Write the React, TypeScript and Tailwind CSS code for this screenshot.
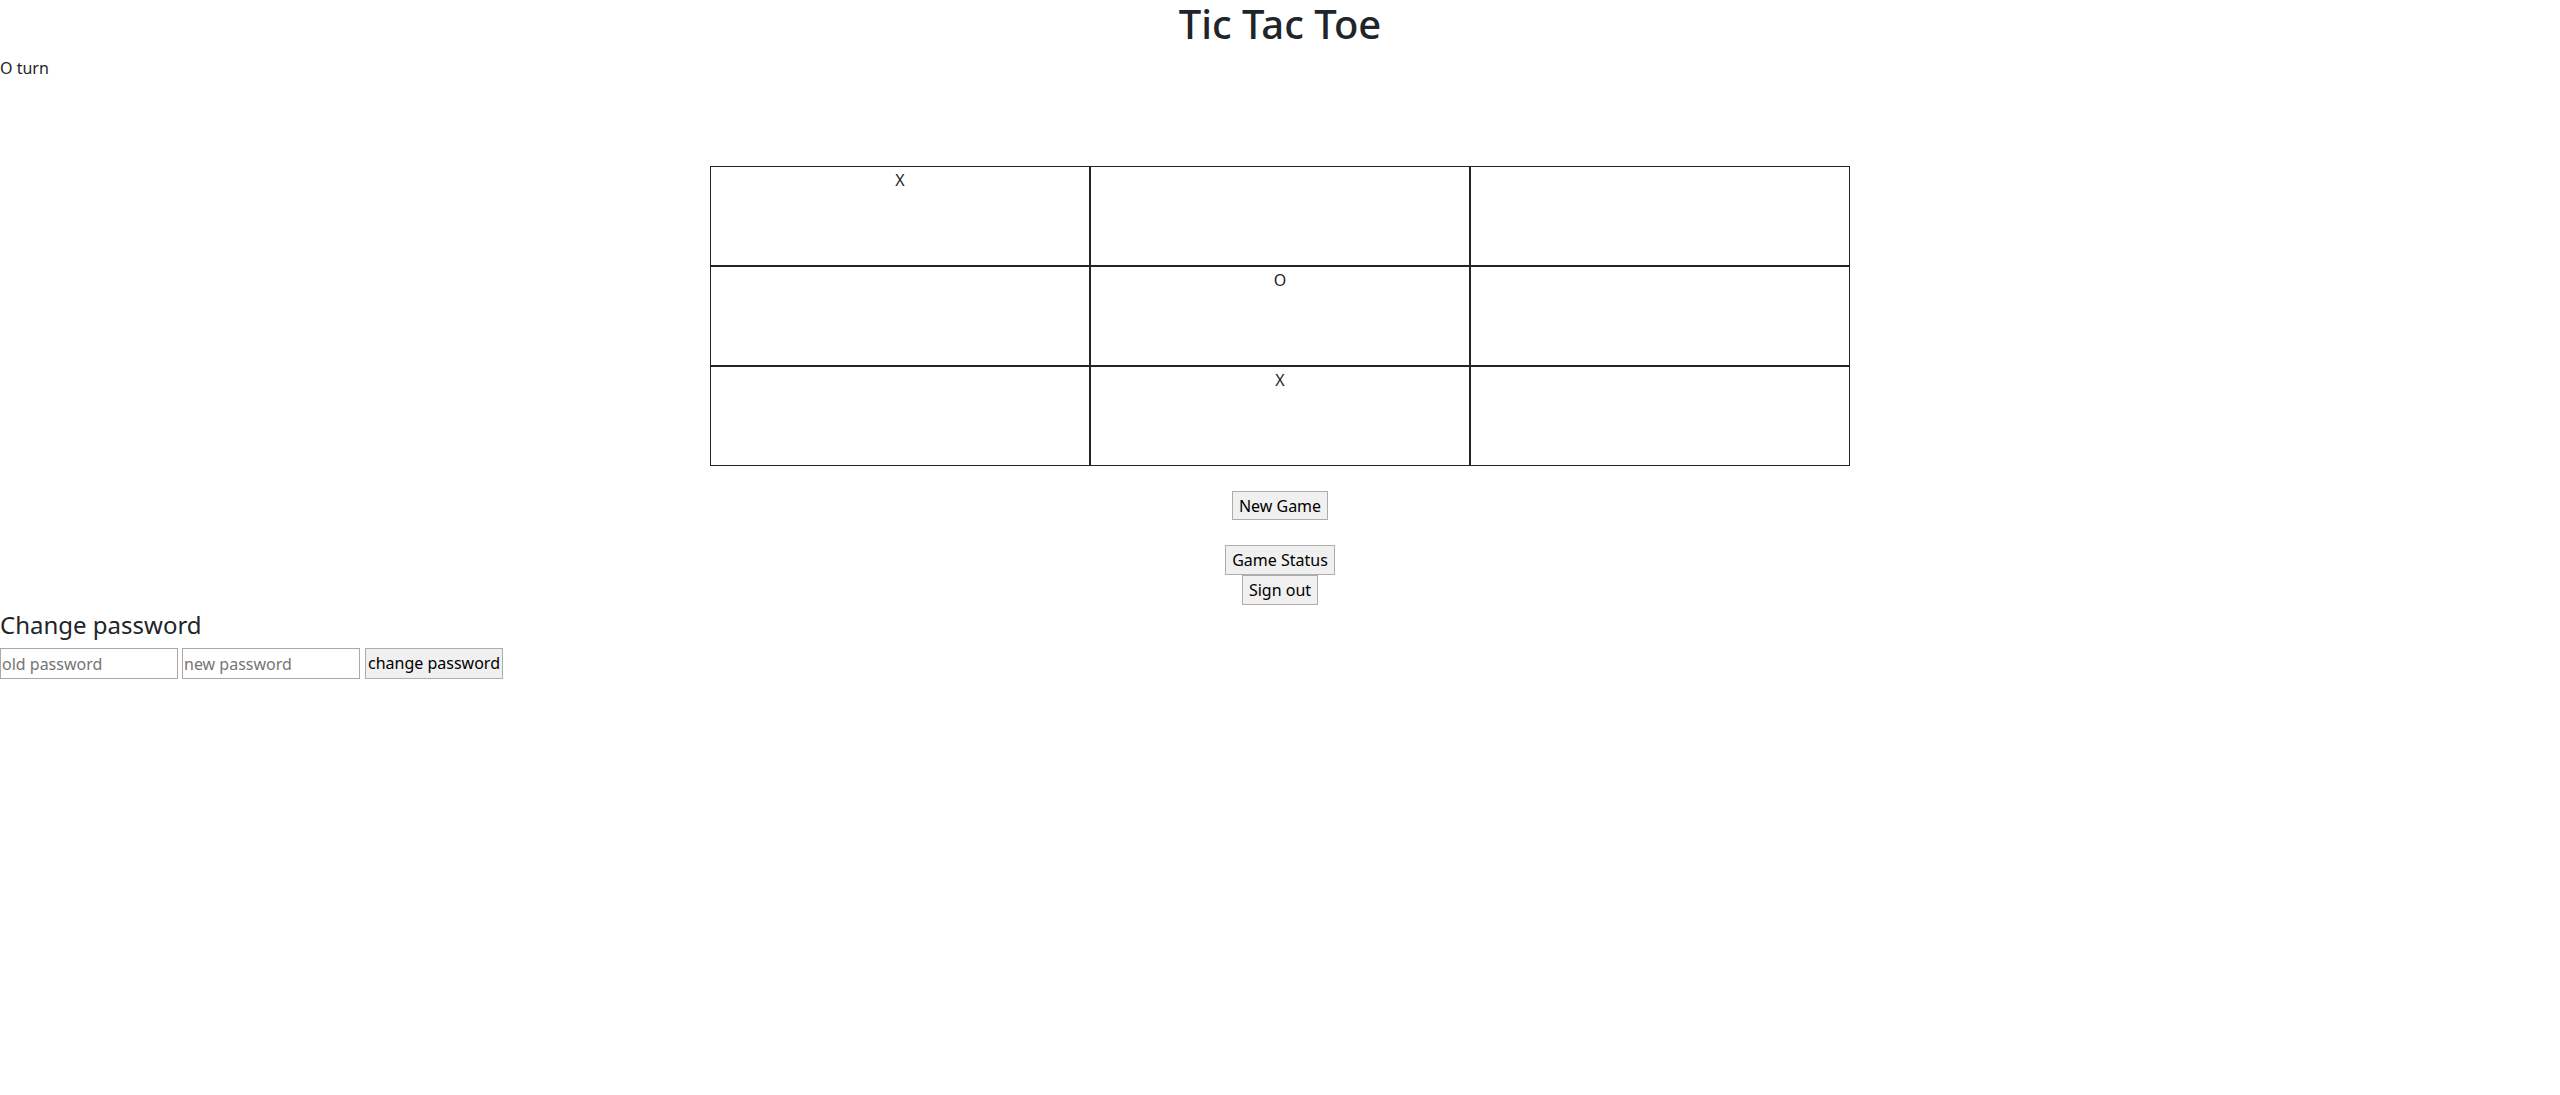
export default function App() {
  const cells = ["X", "", "", "", "O", "", "", "X", ""];
  const font = { fontFamily: '"Segoe UI", "Noto Sans", sans-serif' };
  return (
    <div className="min-h-[1095px] bg-white text-[#212529] text-[16px] leading-[1.5] font-['Noto_Sans',sans-serif]" style={font}>
      <h1 className="m-0 mb-2 text-center text-[40px] leading-[1.2] font-medium">Tic Tac Toe</h1>
      <div className="text-[16px] leading-6">O turn</div>
      <div className="mt-[86px] mx-auto w-[1140px] grid grid-cols-3">
        {cells.map((c, i) => (
          <div key={i} className="h-[100px] border border-[#212529] text-center leading-6 pt-[1px]">
            {c}
          </div>
        ))}
      </div>
      <div className="flex flex-col items-center">
        <button className="mt-[25px] h-[29px] px-[6px] border border-[#adadad] bg-[#f0f0f0] text-[16px] leading-6 text-black">New Game</button>
        <button className="mt-[25px] h-[30px] px-[6px] border border-[#adadad] bg-[#f0f0f0] text-[16px] leading-6 text-black">Game Status</button>
        <button className="h-[30px] px-[6px] border border-[#adadad] bg-[#f0f0f0] text-[16px] leading-6 text-black">Sign out</button>
      </div>
      <h4 className="mt-[6px] mb-2 text-[24px] leading-[1.2] font-normal">Change password</h4>
      <div className="flex gap-1 items-start">
        <input className="w-[178px] h-[31px] border border-[#a9a9a9] px-[1px] pt-[2px] text-[16px] placeholder:text-[#757575] outline-none" placeholder="old password" />
        <input className="w-[178px] h-[31px] border border-[#a9a9a9] px-[1px] pt-[2px] text-[16px] placeholder:text-[#757575] outline-none" placeholder="new password" />
        <button className="ml-[1px] w-[138px] h-[31px] border border-[#adadad] bg-[#f0f0f0] text-[16px] leading-6 text-black">change password</button>
      </div>
    </div>
  );
}
